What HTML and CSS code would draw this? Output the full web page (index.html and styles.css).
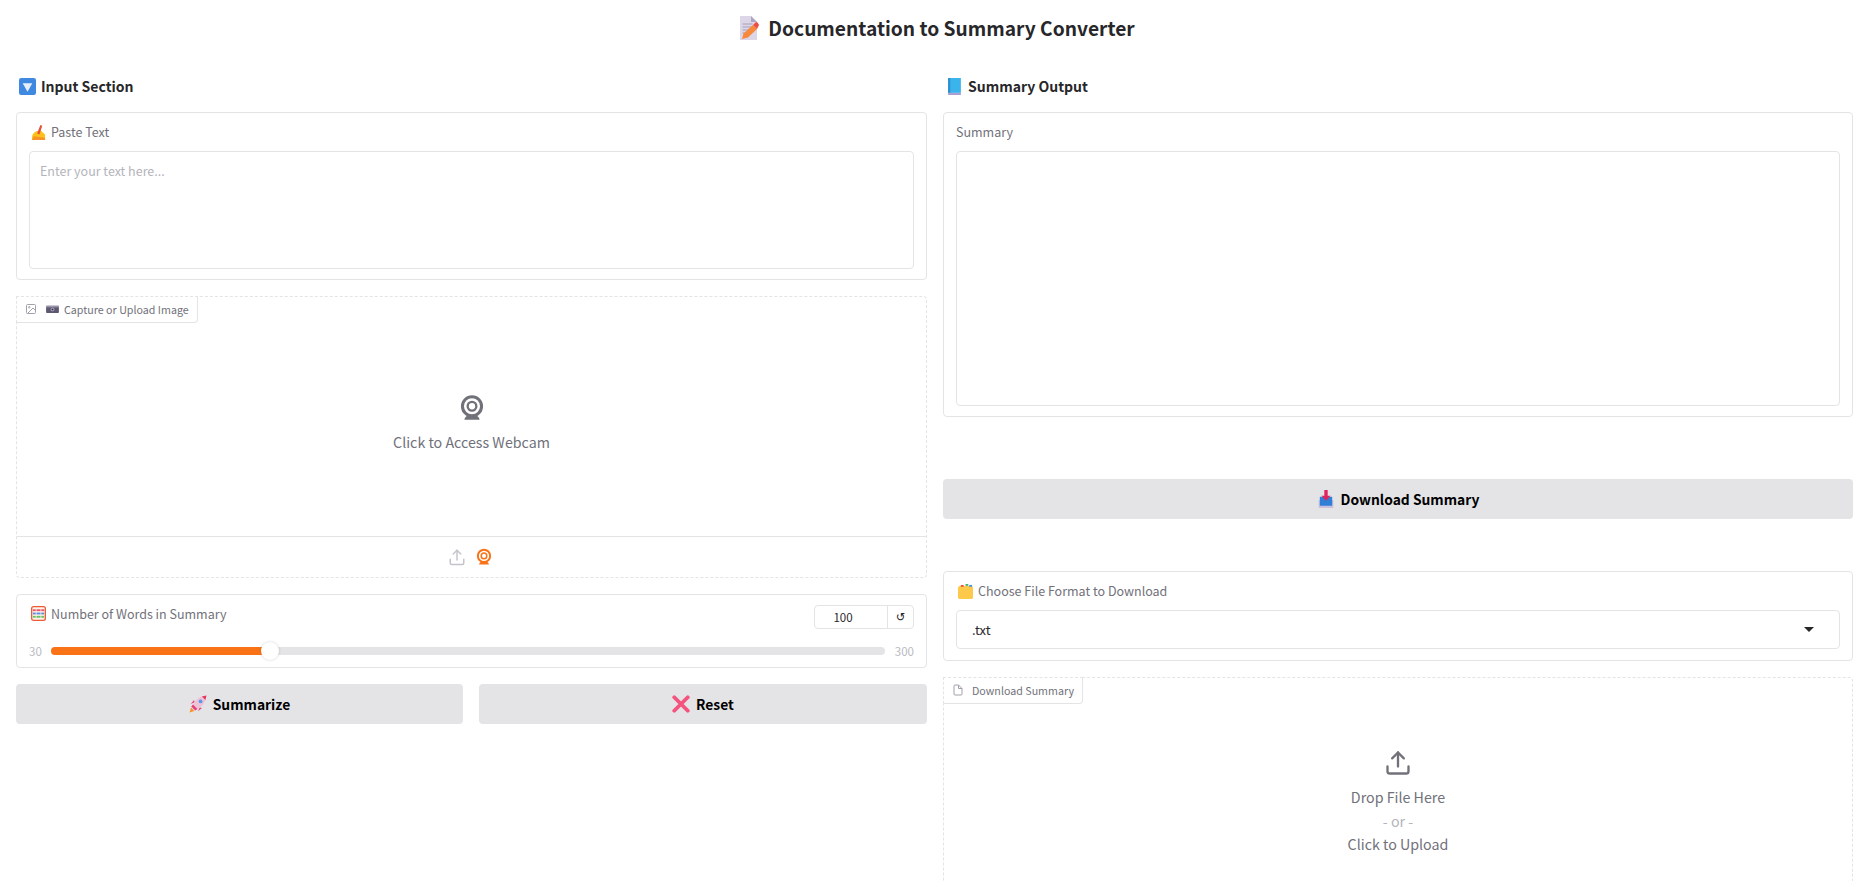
FILE: index.html
```html
<!DOCTYPE html>
<html lang="en">
<head>
<meta charset="utf-8">
<title>Documentation to Summary Converter</title>
<link rel="stylesheet" href="styles.css">
</head>
<body>
<h1 class="title"><svg class="emoji-title" viewBox="0 0 20 24"><path d="M1 0h11l6 6v18H1z" fill="#dcd6e8"/><path d="M12 0l6 6h-6z" fill="#aea6c0"/><path d="M3.500 8h10M3.500 11h11M3.500 14h7M3.500 17h4" stroke="#a79fb8" stroke-width="1.200"/><path d="M3 23l1.500-5.500L14 9l4 4-9 8.500z" fill="#f6893b"/><path d="M14 9l2.500-2.500a1.500 1.500 0 0 1 2 0l1 1.500a1.500 1.500 0 0 1 0 2L18 13z" fill="#ee4f45"/></svg>Documentation to Summary Converter</h1>
<main class="columns">
  <section class="col">
    <h2 class="heading"><svg class="emoji" viewBox="0 0 16 16"><rect width="16" height="16" rx="2" fill="#3f8ae0"/><path d="M3.500 5h9L8 13z" fill="#e5f0fb"/></svg>Input Section</h2>
    <div class="block">
      <label class="label"><svg class="emoji-sm" viewBox="0 0 16 16"><path d="M1 16c-.5-4 1-7.500 4-9l5-1.500 5 4.500v6z" fill="#fcc21b"/><path d="M6.500 9L10 0l2 .8L9 10z" fill="#e8503a"/><path d="M1 16h14v-2.500L3 12z" fill="#f79329"/></svg>Paste Text</label>
      <div class="field field-paste"><span class="placeholder">Enter your text here...</span></div>
    </div>
    <div class="block dashed image-block">
      <div class="tag"><svg class="tag-icon" viewBox="0 0 24 24" fill="none" stroke="#a1a1aa" stroke-width="2"><rect x="3" y="3" width="18" height="18" rx="2"/><circle cx="8.500" cy="8.500" r="1.500"/><path d="M21 15l-5-5L5 21"/></svg><svg class="tag-emoji" viewBox="0 0 16 10"><rect y="1" width="16" height="9" rx="1" fill="#5d5870"/><rect y="1" width="16" height="2" fill="#9a95ad"/><circle cx="8" cy="5.500" r="2.400" fill="#a8a4b8"/><circle cx="8" cy="5.500" r="1.200" fill="#3c3850"/></svg>Capture or Upload Image</div>
      <div class="webcam">
        <svg class="webcam-icon" viewBox="0 0 24 24" fill="none" stroke="#71717a"><circle cx="12" cy="10.500" r="8.200" stroke-width="2.600"/><circle cx="12" cy="10.500" r="3.700" stroke-width="2"/><path d="M5.500 22c.2-1.500 1-2.500 2-3.200h9c1 .7 1.800 1.700 2 3.200z" fill="#71717a" stroke="none"/></svg>
        <span>Click to Access Webcam</span>
      </div>
      <div class="source-bar">
        <svg class="source-icon" viewBox="0 0 24 24" fill="none" stroke="#c4c4cc" stroke-width="2" stroke-linecap="round" stroke-linejoin="round"><path d="M3 15v5a2 2 0 0 0 2 2h14a2 2 0 0 0 2-2v-5"/><path d="M17 8l-5-5-5 5"/><path d="M12 3v13"/></svg>
        <svg class="source-icon" viewBox="0 0 24 24" fill="none" stroke="#f97316"><circle cx="12" cy="10.500" r="8.200" stroke-width="2.600"/><circle cx="12" cy="10.500" r="3.700" stroke-width="2"/><path d="M5.500 22c.2-1.500 1-2.500 2-3.200h9c1 .7 1.800 1.700 2 3.200z" fill="#f97316" stroke="none"/></svg>
      </div>
    </div>
    <div class="block slider-block">
      <div class="slider-head">
        <label class="label"><svg class="emoji-sm" viewBox="0 0 16 16"><rect x=".7" y=".7" width="14.600" height="14.600" rx="2" fill="#fff3e8" stroke="#ee5a36" stroke-width="1.400"/><path d="M2 4.500h12" stroke="#e8566e" stroke-width="2"/><path d="M2 8h12" stroke="#5a8ee0" stroke-width="2"/><path d="M2 11.500h12" stroke="#6cc06a" stroke-width="2"/><path d="M5.500 2v12M10.500 2v12" stroke="#fff3e8" stroke-width=".8"/></svg>Number of Words in Summary</label>
        <div class="number-box"><span class="number">100</span><span class="reset-mark">↺</span></div>
      </div>
      <div class="slider-row">
        <span class="limit">30</span>
        <div class="track"><div class="fill" style="width:26.3%"></div><div class="thumb" style="left:26.3%"></div></div>
        <span class="limit limit-max">300</span>
      </div>
    </div>
    <div class="btn-row">
      <button class="btn"><svg class="emoji-btn" viewBox="0 0 16 16"><path d="M5 6.500L1.500 8 4.500 4.500zM9.500 11L8 14.500l3.500-3z" fill="#ea3f75"/><path d="M3.500 8.500C6 3.500 10.500 1 15.500.5 15 5.500 12.500 10 7.500 12.500z" fill="#eec3d8"/><circle cx="10.300" cy="5.700" r="1.700" fill="#5a9ae8"/><path d="M11.500 1.400l4-.9-.9 4z" fill="#e8365f"/><path d="M3.500 8.500L7.500 12.500l-2 1.300-3.500-3.500z" fill="#ea3f75"/><path d="M.5 15.500L1.800 11.200l3 3z" fill="#f79329"/></svg>Summarize</button>
      <button class="btn"><svg class="emoji-btn" viewBox="0 0 16 16"><path d="M2 2l12 12M14 2L2 14" stroke="#f4537e" stroke-width="3.400" stroke-linecap="round"/></svg>Reset</button>
    </div>
  </section>
  <section class="col">
    <h2 class="heading"><svg class="emoji" viewBox="0 0 16 16"><path d="M2 0h12v14H2z" fill="#3bb4ec"/><path d="M2 0h2v14H2z" fill="#2c8fd0"/><path d="M2 14h12v2H2z" fill="#a99fd0"/></svg>Summary Output</h2>
    <div class="block">
      <label class="label">Summary</label>
      <div class="field field-summary"></div>
    </div>
    <button class="btn btn-download"><svg class="emoji-btn" viewBox="0 0 16 16"><path d="M1.500 9h13v7h-13z" fill="#c9c0de"/><path d="M2.500 6h11v8h-11z" fill="#2f7fd6"/><path d="M6.500 0h3v5h2.500L8 9.500 4 5h2.500z" fill="#e0245e"/></svg>Download Summary</button>
    <div class="block format-block">
      <label class="label"><svg class="emoji-sm" viewBox="0 0 16 16"><rect y="2" width="16" height="14" rx="2" fill="#fcc94a"/><path d="M3 1h3v2H3z" fill="#e8503a"/><path d="M8 0h3v2H8z" fill="#4fae6a"/><path d="M12 1h3v2h-3z" fill="#4a90e2"/></svg>Choose File Format to Download</label>
      <div class="field field-select"><span class="select-value">.txt</span><span class="caret"></span></div>
    </div>
    <div class="block dashed file-block">
      <div class="tag"><svg class="tag-icon" viewBox="0 0 24 24" fill="none" stroke="#a1a1aa" stroke-width="2" stroke-linejoin="round"><path d="M13 2H6a2 2 0 0 0-2 2v16a2 2 0 0 0 2 2h12a2 2 0 0 0 2-2V9z"/><path d="M13 2v7h7"/></svg>Download Summary</div>
      <div class="upload">
        <svg class="upload-icon" viewBox="0 0 24 24" fill="none" stroke="#71717a" stroke-width="2" stroke-linecap="round" stroke-linejoin="round"><path d="M3 15v4a2 2 0 0 0 2 2h14a2 2 0 0 0 2-2v-4"/><path d="M17 8l-5-5-5 5"/><path d="M12 3v12"/></svg>
        <span>Drop File Here</span>
        <span class="or">- or -</span>
        <span>Click to Upload</span>
      </div>
    </div>
  </section>
</main>
</body>
</html>
```

FILE: styles.css
```css
* { box-sizing: border-box; }
html, body { margin: 0; height: 881px; overflow: hidden; background: #fff; }
body {
  padding: 16px 8px 0 16px;
  font-family: "Noto Sans CJK SC", "Noto Sans", sans-serif;
  color: #27272a;
}
.title {
  margin: 0;
  height: 24px;
  display: flex;
  align-items: center;
  justify-content: center;
  gap: 9px;
  padding-left: 5px;
  font-size: 19.200px;
  line-height: 24px;
  font-weight: 600;
}
.emoji-title { width: 20px; height: 24px; flex: none; }
.columns { display: grid; grid-template-columns: 911px 910px; column-gap: 16px; margin-top: 34px; }
.col { display: flex; flex-direction: column; gap: 16px; min-width: 0; }
.heading {
  margin: 2px 0 0 3px;
  height: 20px;
  display: flex;
  align-items: center;
  gap: 5px;
  font-size: 14px;
  font-weight: 600;
  line-height: 20px;
}
.emoji { width: 17px; height: 17px; flex: none; }
.block {
  position: relative;
  border: 1px solid #e4e4e7;
  border-radius: 4px;
  padding: 9px 12px 10px 12px;
  background: #fff;
}
.label {
  display: flex;
  align-items: center;
  gap: 5px;
  font-size: 12.500px;
  line-height: 20px;
  color: #71717a;
  height: 20px;
  margin-bottom: 9px;
}
.emoji-sm { width: 15px; height: 15px; margin-left: 2px; flex: none; }
.field { border: 1px solid #e4e4e7; border-radius: 4px; background: #fff; }
.field-paste { height: 118px; padding: 9px 10px; }
.field-summary { height: 255px; }
.placeholder { font-size: 12.500px; line-height: 20px; color: #b4b4bb; display: block; }
.dashed { border-style: dashed; padding: 0; }
.image-block { height: 282px; display: flex; flex-direction: column; }
.tag {
  position: absolute;
  top: -1px;
  left: -1px;
  height: 27px;
  display: flex;
  align-items: center;
  padding: 0 8px 1px;
  gap: 8px;
  font-size: 10.700px;
  color: #71717a;
  border: 1px solid #e4e4e7;
  border-top-style: dashed;
  border-left-style: dashed;
  border-radius: 0 0 4px 0;
  background: #fff;
}
.tag-icon { width: 12px; height: 12px; flex: none; }
.tag-emoji { width: 13px; height: 8px; margin-left: 1px; margin-right: -3px; flex: none; }
.webcam {
  flex: 1;
  display: flex;
  flex-direction: column;
  align-items: center;
  justify-content: center;
  gap: 10px;
  font-size: 14.250px;
  line-height: 20px;
  color: #71717a;
  padding-top: 12px;
}
.webcam-icon { width: 28px; height: 28px; }
.source-bar {
  height: 41px;
  border-top: 1px solid #e4e4e7;
  display: flex;
  align-items: center;
  justify-content: center;
  gap: 9px;
  padding-right: 2px;
}
.source-icon { width: 18px; height: 18px; }
.slider-block { height: 74px; padding: 10px 12px 0 12px; }
.slider-head { display: flex; justify-content: space-between; align-items: flex-start; }
.slider-head .label { margin: 0; padding-bottom: 7px; height: 24px; }
.number-box {
  display: flex;
  width: 100px;
  height: 24px;
  border: 1px solid #e4e4e7;
  border-radius: 4px;
  font-size: 11.500px;
  line-height: 22px;
}
.number { flex: 1; text-align: center; padding-right: 16px; border-right: 1px solid #e4e4e7; }
.reset-mark { width: 25px; text-align: center; font-family: "DejaVu Sans", sans-serif; }
.slider-row { display: flex; align-items: center; gap: 9px; margin-top: 14px; height: 16px; }
.limit { font-size: 11.500px; color: #b9b9c0; }
.limit-max { margin-left: 1px; }
.track { position: relative; flex: 1; height: 8px; border-radius: 4px; background: #e4e4e7; }
.fill { height: 8px; border-radius: 4px 0 0 4px; background: #f97316; }
.thumb {
  position: absolute;
  top: -5px;
  width: 18px;
  height: 18px;
  margin-left: -9px;
  border-radius: 50%;
  background: #fff;
  box-shadow: 0 0 3px rgba(0,0,0,.18);
}
.btn-row { display: grid; grid-template-columns: 447px 448px; gap: 16px; }
.btn {
  height: 40px;
  width: 100%;
  border: 0;
  border-radius: 4px;
  background: #e4e4e7;
  display: flex;
  align-items: center;
  justify-content: center;
  gap: 6px;
  font: 600 13.850px "Noto Sans CJK SC", "Noto Sans", sans-serif;
  color: #000;
}
.emoji-btn { width: 18px; height: 18px; flex: none; }
.btn-download { margin-top: 46px; }
.format-block { margin-top: 36px; height: 90px; }
.field-select { height: 39px; display: flex; align-items: center; justify-content: space-between; padding: 0 25px 0 15px; }
.select-value { font-size: 13px; color: #27272a; }
.caret { width: 0; height: 0; border: 5px solid transparent; border-top: 5px solid #27272a; border-bottom: 0; }
.file-block { height: 300px; }
.upload {
  position: absolute;
  left: 0; right: 0; top: 71px;
  display: flex;
  flex-direction: column;
  align-items: center;
  font-size: 14.250px;
  line-height: 23.700px;
  color: #71717a;
}
.upload-icon { width: 28px; height: 28px; margin-bottom: 8px; }
.or { color: #b4b4bb; }
```
